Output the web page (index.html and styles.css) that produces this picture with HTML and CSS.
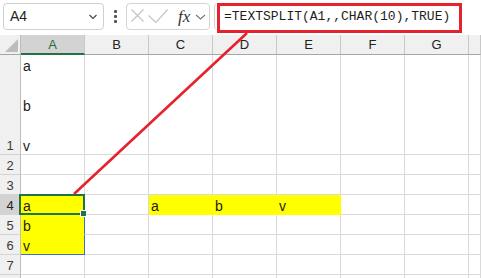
FILE: index.html
```html
<!DOCTYPE html>
<html lang="en">
<head>
  <meta charset="UTF-8">
  <title>TEXTSPLIT</title>
  <link rel="stylesheet" href="styles.css">
</head>
<body>
  <div class="toolbar">
    <div class="namebox">
      <span>A4</span>
      <svg width="10" height="8" viewBox="0 0 10 8"><polyline points="1.5,2 5,5.5 8.5,2" fill="none" stroke="#444" stroke-width="1.1"/></svg>
    </div>
    <div class="dots"><i></i><i></i><i></i></div>
    <div class="fxbox">
      <svg width="84" height="25" viewBox="0 0 84 25">
        <path d="M5.5 5.5 L17.5 17.5 M17.5 5.5 L5.5 17.5" stroke="#c4c4c4" stroke-width="1.2" fill="none"/>
        <polyline points="22.5,11.5 30,18.5 41.5,5.5" stroke="#c4c4c4" stroke-width="1.2" fill="none"/>
        <text x="52" y="17.5" class="fx">fx</text>
        <polyline points="70,11 74.5,15 79,11" stroke="#777" stroke-width="1.1" fill="none"/>
      </svg>
    </div>
    <div class="formula">
      <div class="formula-box">=TEXTSPLIT(A1,,CHAR(10),TRUE)</div>
    </div>
  </div>

  <div class="sheet">
    <div class="corner"><svg width="21" height="20" viewBox="0 0 21 20"><polygon points="18,4 18,17 5,17" fill="#bdbdbd"/></svg></div>
    <div class="ch active">A</div>
    <div class="ch">B</div>
    <div class="ch">C</div>
    <div class="ch">D</div>
    <div class="ch">E</div>
    <div class="ch">F</div>
    <div class="ch">G</div>
    <div class="ch"></div>

    <div class="rh">1</div>
    <div class="c lines"><span>a</span><span>b</span><span>v</span></div>
    <div class="c"></div><div class="c"></div><div class="c"></div><div class="c"></div><div class="c"></div><div class="c"></div><div class="c"></div>

    <div class="rh">2</div>
    <div class="c"></div><div class="c"></div><div class="c"></div><div class="c"></div><div class="c"></div><div class="c"></div><div class="c"></div><div class="c"></div>

    <div class="rh">3</div>
    <div class="c"></div><div class="c"></div><div class="c"></div><div class="c"></div><div class="c"></div><div class="c"></div><div class="c"></div><div class="c"></div>

    <div class="rh active">4</div>
    <div class="c fill sel">a<span class="handle"></span></div>
    <div class="c"></div>
    <div class="c fill">a</div>
    <div class="c fill">b</div>
    <div class="c fill">v</div>
    <div class="c"></div><div class="c"></div><div class="c"></div>

    <div class="rh">5</div>
    <div class="c fill spill">b</div>
    <div class="c"></div><div class="c"></div><div class="c"></div><div class="c"></div><div class="c"></div><div class="c"></div><div class="c"></div>

    <div class="rh">6</div>
    <div class="c fill spill last">v</div>
    <div class="c"></div><div class="c"></div><div class="c"></div><div class="c"></div><div class="c"></div><div class="c"></div><div class="c"></div>

    <div class="rh">7</div>
    <div class="c"></div><div class="c"></div><div class="c"></div><div class="c"></div><div class="c"></div><div class="c"></div><div class="c"></div><div class="c"></div>

    <div class="rh"></div>
    <div class="c"></div><div class="c"></div><div class="c"></div><div class="c"></div><div class="c"></div><div class="c"></div><div class="c"></div><div class="c"></div>
  </div>

  <svg class="pointer" width="481" height="278" viewBox="0 0 481 278">
    <line x1="74" y1="194" x2="247" y2="33" stroke="#e5222e" stroke-width="2.6"/>
  </svg>
</body>
</html>
```

FILE: styles.css
```css
* {
  margin: 0;
  padding: 0;
  box-sizing: border-box;
}

body {
  width: 481px;
  height: 278px;
  overflow: hidden;
  position: relative;
  background-color: #fff;
  color: #222;
  font-family: 'Liberation Sans', Arial, sans-serif;
}

.toolbar {
  height: 35px;
  display: flex;
  align-items: flex-start;
  padding: 3px 0 0 3px;
}

.namebox {
  width: 101px;
  height: 27px;
  border: 1px solid #d0d0d0;
  border-radius: 4px;
  display: flex;
  align-items: center;
  justify-content: space-between;
  padding: 0 5px 0 6px;
  font-size: 14px;
  line-height: 25px;
}

.namebox svg {
  margin-top: 1px;
}

.dots {
  width: 22px;
  display: flex;
  flex-direction: column;
  align-items: center;
  gap: 2px;
  padding-top: 7px;
}

.dots i {
  display: block;
  width: 3px;
  height: 3px;
  background-color: #555;
  border-radius: 1px;
}

.fxbox {
  width: 84px;
  height: 27px;
  border: 1px solid #d4d4d4;
  border-radius: 4px;
}

.fxbox svg {
  display: block;
  margin-left: -1px;
}

.fx {
  font-family: 'Liberation Serif', 'Times New Roman', serif;
  font-style: italic;
  font-size: 17px;
  fill: #333;
}

.formula {
  margin-left: 4px;
  height: 27px;
  border-left: 1px solid #d0d0d0;
  border-radius: 4px 0 0 4px;
  padding-left: 2px;
}

.formula-box {
  width: 245px;
  height: 30px;
  border: 3px solid #e5222e;
  padding-left: 4px;
  font-family: 'Liberation Mono', 'Courier New', monospace;
  font-size: 13px;
  line-height: 22px;
  color: #1e1e1e;
  white-space: nowrap;
}

.sheet {
  display: grid;
  grid-template-columns: 21px repeat(7, 64px) 12px;
  grid-template-rows: 20px 100px repeat(7, 20px);
  font-size: 14px;
}

.corner {
  background-color: #f0f0f0;
  border-right: 1px solid #bdbdbd;
  border-bottom: 1px solid #a6a6a6;
}

.corner svg {
  display: block;
}

.ch {
  background-color: #f0f0f0;
  border-right: 1px solid #c8c8c8;
  border-bottom: 1px solid #a6a6a6;
  font-size: 13px;
  color: #222;
  display: flex;
  align-items: center;
  justify-content: center;
}

.ch.active {
  background-color: #d3d3d3;
  color: #1d6b40;
  border-bottom: 2px solid #217346;
}

.rh {
  background-color: #f0f0f0;
  border-right: 1px solid #bdbdbd;
  border-bottom: 1px solid #d4d4d4;
  font-size: 13px;
  line-height: 15px;
  color: #3a3a3a;
  display: flex;
  align-items: flex-end;
  justify-content: center;
  padding-bottom: 1px;
}

.rh.active {
  background-color: #d3d3d3;
  color: #222;
}

.c {
  border-right: 1px solid #dadada;
  border-bottom: 1px solid #dadada;
  display: flex;
  align-items: flex-end;
  padding-left: 2px;
  line-height: 16px;
  color: #1a1a1a;
}

.lines {
  flex-direction: column;
  align-items: flex-start;
  justify-content: flex-end;
  gap: 24px;
}

.fill {
  background-color: #ffff00;
  border-color: #ffff00;
}

.spill {
  border-right-color: #3d6fd1;
}

.spill.last {
  border-bottom-color: #3d6fd1;
}

.sel {
  position: relative;
  z-index: 2;
}

.sel::after {
  content: '';
  position: absolute;
  top: -1px;
  left: -2px;
  right: -1px;
  bottom: -1px;
  border: 2px solid #217346;
}

.handle {
  position: absolute;
  right: -3px;
  bottom: -3px;
  width: 7px;
  height: 7px;
  background-color: #217346;
  border: 1px solid #fff;
  z-index: 3;
}

.pointer {
  position: absolute;
  top: 0;
  left: 0;
  pointer-events: none;
}
```
